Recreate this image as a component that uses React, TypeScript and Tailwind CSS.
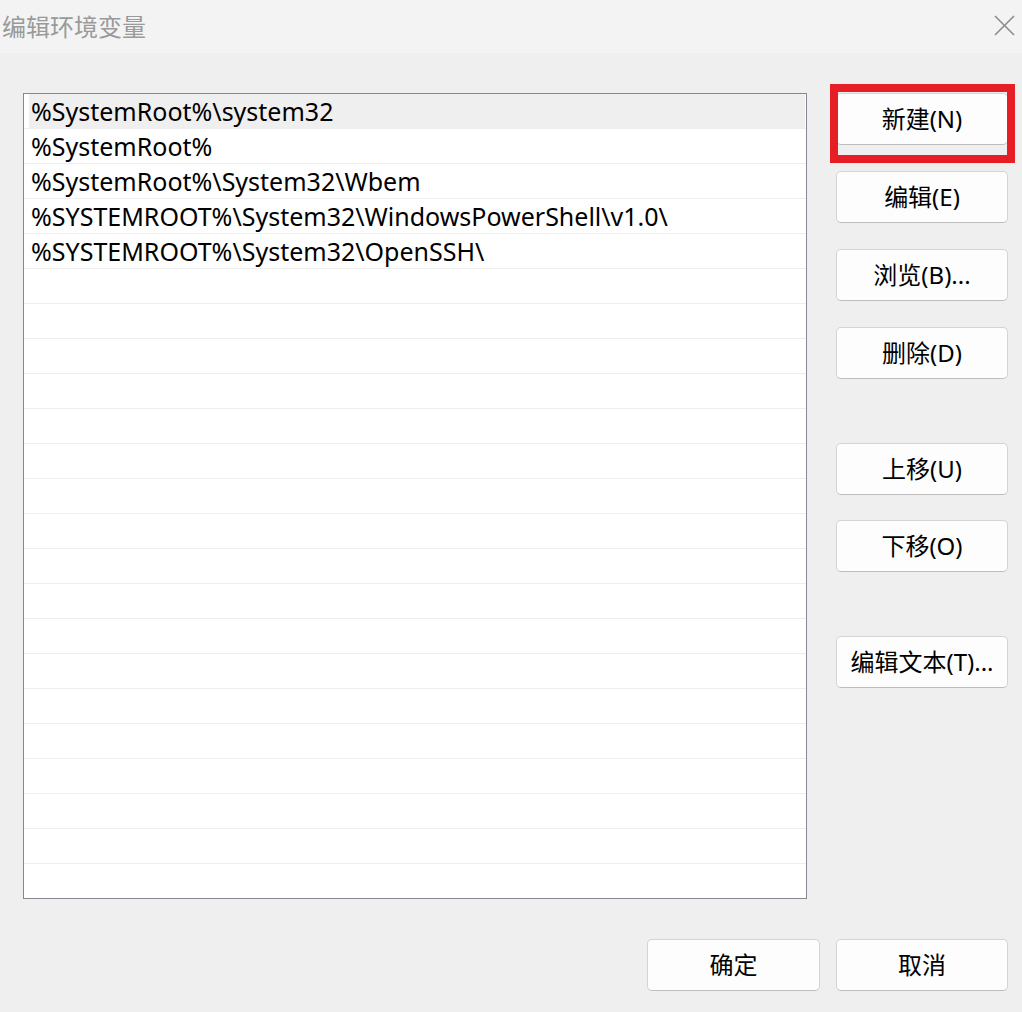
import React from "react";

const paths = [
  "%SystemRoot%\\system32",
  "%SystemRoot%",
  "%SystemRoot%\\System32\\Wbem",
  "%SYSTEMROOT%\\System32\\WindowsPowerShell\\v1.0\\",
  "%SYSTEMROOT%\\System32\\OpenSSH\\",
];

const rows = Array.from({ length: 23 }, (_, i) => paths[i] ?? "");

const btn =
  "h-[52px] w-[172px] rounded-[5px] border border-[#d4d4d4] border-b-[#bdbdbd] bg-[#fdfdfd] text-[24px] text-black flex items-center justify-center";

const App = () => {
  return (
    <div
      className="w-[1022px] h-[1012px] bg-[#efefef] flex flex-col overflow-hidden"
      style={{ fontFamily: '"Noto Sans", "Noto Sans CJK SC", sans-serif' }}
    >
      <div className="h-[53px] bg-[#f3f3f3] flex items-center justify-between pl-[2px] pr-[7px]">
        <span className="text-[24px] text-[#9a9a9a] leading-none -mt-[2px]" style={{ fontFamily: '"Noto Sans CJK SC", sans-serif' }}>
          编辑环境变量
        </span>
        <svg width="21" height="21" viewBox="0 0 21 21" className="-mt-[3px]">
          <path d="M1 1L20 20M20 1L1 20" stroke="#8c8c8c" strokeWidth="1.6" />
        </svg>
      </div>

      <div className="flex pt-[40px] pl-[23px]">
        <div className="w-[784px] h-[806px] border border-[#848890] bg-white flex flex-col">
          {rows.map((text, i) => (
            <div key={i} className="h-[35px] shrink-0 border-b border-[#eeeeee] last:border-b-0 flex">
              <div
                className={`flex-1 ml-[5px] mr-[1px] flex items-center pl-[2px] pt-[1px] text-[25px] leading-none text-black whitespace-nowrap ${
                  i === 0 ? "bg-[#efefef]" : ""
                }`}
              >
                {text}
              </div>
            </div>
          ))}
        </div>

        <div className="ml-[29px] flex flex-col">
          <div className="relative">
            <div className={btn}>新建(N)</div>
            <div className="absolute left-[-6px] top-[-9px] right-[-7px] bottom-[-18px] border-[8px] border-[#e61e25]" />
          </div>
          <div className={`${btn} mt-[26px]`}>编辑(E)</div>
          <div className={`${btn} mt-[26px]`}>浏览(B)...</div>
          <div className={`${btn} mt-[26px]`}>删除(D)</div>
          <div className={`${btn} mt-[64px]`}>上移(U)</div>
          <div className={`${btn} mt-[25px]`}>下移(O)</div>
          <div className={`${btn} mt-[64px]`}>编辑文本(T)...</div>
        </div>
      </div>

      <div className="flex justify-end gap-[16px] pr-[14px] mt-[40px]">
        <div className={`${btn} w-[173px]`}>确定</div>
        <div className={btn}>取消</div>
      </div>
    </div>
  );
};

export default App;
